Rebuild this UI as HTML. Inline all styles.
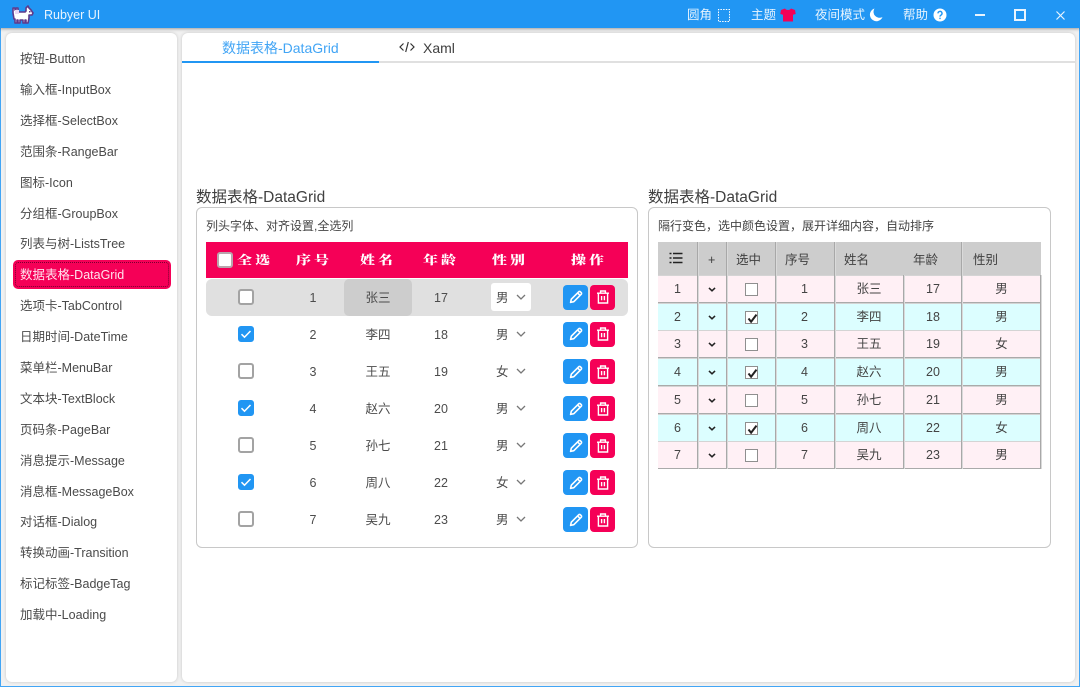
<!DOCTYPE html>
<html lang="zh-CN">
<head>
<meta charset="utf-8">
<title>Rubyer UI</title>
<style>
*{box-sizing:border-box;margin:0;padding:0}
html,body{width:1080px;height:687px;overflow:hidden;background:#fff}
body{position:relative;font-family:"Liberation Sans","Noto Sans CJK SC",sans-serif;font-size:12.5px;color:#444}
.a{position:absolute}
.t{position:absolute;white-space:nowrap}
.c{position:absolute;text-align:center;white-space:nowrap}
#win{position:absolute;left:0;top:0;width:1080px;height:687px;background:#f1f1f1;border:1px solid #42a5f5;border-top:0}
#bar{position:absolute;left:0;top:0;width:1080px;height:28px;background:#2196f3;box-shadow:0 1px 3px rgba(0,0,0,.35);color:#e8f4fe;line-height:30px;font-size:12.5px}
.panel{position:absolute;background:#fff;border-radius:6px;top:33px;height:649px;box-shadow:0 0 3px rgba(0,0,0,.18)}
.nav{position:absolute;left:20px;white-space:nowrap;line-height:18px;font-size:12.5px;color:#4a4a4a}
.gt{position:absolute;top:188px;font-size:15.5px;line-height:20px;color:#404040;white-space:nowrap}
.box{position:absolute;top:207px;height:341px;border:1px solid #c8c8c8;border-radius:6px;background:#fff}
.sub{position:absolute;top:218px;font-size:12px;line-height:16px;color:#444;white-space:nowrap}
.hd{position:absolute;top:252px;font-family:"Noto Serif CJK SC","Liberation Serif",serif;font-weight:900;font-size:15px;line-height:16px;letter-spacing:3px;color:#fff;white-space:nowrap;transform:scaleY(.8);transform-origin:0 50%}
.lr{position:absolute;left:206px;width:422px;height:37px;line-height:39px;font-size:12.5px;color:#4c4c4c}
.cb{position:absolute;left:32px;top:10px;width:16px;height:16px;border:2px solid #a3a3a3;border-radius:3px;background:#fff}
.cb.on{background:#2196f3;border-color:#2196f3}
.cb svg{position:absolute;left:-2px;top:-2px}
.btn{position:absolute;top:6px;width:25px;height:25px;border-radius:4px}
.btn svg{position:absolute;left:4.5px;top:4.5px}
.e{left:357px;background:#2196f3}
.d{left:384px;background:#f50057}
.ar{position:absolute;left:310px;top:15px}
.rr{position:absolute;left:658px;width:383px;height:28px;line-height:27px;border-top:1px solid #d4d4d4;border-bottom:1px solid #aaa;font-size:12.5px;color:#444}
.p{background:#fff0f5}.y{background:#dcfeff}
.v{position:absolute;width:1px;background:#a8a8a8;box-shadow:1px 0 0 #dadada}
.rc{position:absolute;left:658px;top:242px;width:383px;height:33px;background:#cdcdcd}
.rh{position:absolute;top:252px;font-size:12.5px;line-height:16px;color:#404040;white-space:nowrap}
.sq{position:absolute;left:87px;top:7px;width:13px;height:13px;border:1px solid #8f8f8f;background:#fff}
.sq svg{position:absolute;left:0;top:0}
.ch{position:absolute;left:50px;top:11px}
</style>
</head>
<body>
<svg width="0" height="0" style="position:absolute">
<symbol id="pen" viewBox="0 0 16 16"><path d="M2.600 13.400l.7-3.200 7.400-7.400a1.200 1.200 0 0 1 1.700 0l.8.8a1.200 1.200 0 0 1 0 1.700l-7.400 7.400zM9.600 3.900l2.500 2.500" fill="none" stroke="#fff" stroke-width="1.600" stroke-linejoin="round"/></symbol>
<symbol id="bin" viewBox="0 0 16 16"><path d="M2 4.200h12M5.600 4.200V2h4.800v2.200M3.400 4.200v9.800h9.200V4.200M6.600 7v4.200M9.400 7v4.200" fill="none" stroke="#fff" stroke-width="1.400"/></symbol>
<symbol id="dn" viewBox="0 0 10 6"><path d="M1 1l4 4 4-4" fill="none" stroke="#777" stroke-width="1.300"/></symbol>
<symbol id="dk" viewBox="0 0 10 6"><path d="M1.200 1l3.800 3.600L8.800 1" fill="none" stroke="#222" stroke-width="1.900"/></symbol>
<symbol id="tk" viewBox="0 0 16 16"><path d="M3.500 8.200l3 3 6-6.200" fill="none" stroke="#fff" stroke-width="1.500"/></symbol>
<symbol id="tb" viewBox="0 0 13 13"><path d="M2.500 6.500l2.600 3.200L10.500 2.600" fill="none" stroke="#222" stroke-width="2"/></symbol>
</svg>
<div id="win"></div>

<div id="bar">
  <svg class="a" style="left:12px;top:5px" width="22" height="19" viewBox="0 0 22 19">
    <path d="M1 8V3h2v2h1V3h2v4h7l1-1V3l2-2 1 2 2 2 2 3-1 2h-3v3l-1 5h-2v-3h-1v3h-2v-3H8v3H6v-3H5v3H3v-4H2z" fill="#fff" stroke="#5e3a8c" stroke-width="1.600" stroke-linejoin="round"/>
    <rect x="17" y="6" width="1.500" height="1.500" fill="#5e3a8c"/>
    <rect x="3" y="5" width="4" height="4" fill="#e9d8f5"/>
  </svg>
  <span class="t" style="left:44px;top:0">Rubyer UI</span>
  <span class="t" style="left:687px;top:0">圆角</span>
  <svg class="a" style="left:718px;top:9px" width="12" height="13" viewBox="0 0 12 13"><path d="M.5 4V.5h11V12.500H.5V4" fill="none" stroke="#fff" stroke-width="1" stroke-dasharray="1.500 1.200"/></svg>
  <span class="t" style="left:751px;top:0">主题</span>
  <svg class="a" style="left:780px;top:8px" width="16" height="14" viewBox="0 0 16 14"><path d="M5 .5L1 2 .3 6l2.700.700V13.500h10V6.700L15.700 6 15 2 11 .5C10 2.500 6 2.500 5 .5z" fill="#f50057"/></svg>
  <span class="t" style="left:815px;top:0">夜间模式</span>
  <svg class="a" style="left:869px;top:8px" width="14" height="14" viewBox="0 0 14 14"><path d="M5.500.5A6.500 6.500 0 1 0 13.500 9 6 6 0 0 1 5.500.5z" fill="#fff"/></svg>
  <span class="t" style="left:903px;top:0">帮助</span>
  <svg class="a" style="left:933px;top:8px" width="14" height="14" viewBox="0 0 14 14"><circle cx="7" cy="7" r="6.500" fill="#fff"/><path d="M5 5.400a2 2 0 1 1 3 1.700c-.7.400-1 .8-1 1.500" fill="none" stroke="#2196f3" stroke-width="1.400"/><rect x="6.300" y="9.700" width="1.400" height="1.400" fill="#2196f3"/></svg>
  <div class="a" style="left:975px;top:14px;width:10px;height:2px;background:#e8f4fe"></div>
  <div class="a" style="left:1014px;top:9px;width:12px;height:12px;border:2px solid #e8f4fe"></div>
  <svg class="a" style="left:1055px;top:10px" width="11" height="11" viewBox="0 0 11 11"><path d="M1.500 1.500l8 8M9.500 1.500l-8 8" stroke="#e8f4fe" stroke-width="1.200"/></svg>
</div>

<div class="panel" style="left:6px;width:171px"></div>
<div class="panel" style="left:182px;width:893px"></div>

<div class="a" style="left:13px;top:260px;width:158px;height:29px;background:#f50057;border-radius:5px"></div>
<div class="a" style="left:15px;top:262px;width:154px;height:25px;border:1px dotted #7a0030;border-radius:3px"></div>
<span class="nav" style="top:50px">按钮-Button</span>
<span class="nav" style="top:81px">输入框-InputBox</span>
<span class="nav" style="top:112px">选择框-SelectBox</span>
<span class="nav" style="top:143px">范围条-RangeBar</span>
<span class="nav" style="top:174px">图标-Icon</span>
<span class="nav" style="top:205px">分组框-GroupBox</span>
<span class="nav" style="top:235px">列表与树-ListsTree</span>
<span class="nav" style="top:266px;color:#ffe3ee">数据表格-DataGrid</span>
<span class="nav" style="top:297px">选项卡-TabControl</span>
<span class="nav" style="top:328px">日期时间-DateTime</span>
<span class="nav" style="top:359px">菜单栏-MenuBar</span>
<span class="nav" style="top:390px">文本块-TextBlock</span>
<span class="nav" style="top:421px">页码条-PageBar</span>
<span class="nav" style="top:452px">消息提示-Message</span>
<span class="nav" style="top:483px">消息框-MessageBox</span>
<span class="nav" style="top:513px">对话框-Dialog</span>
<span class="nav" style="top:544px">转换动画-Transition</span>
<span class="nav" style="top:575px">标记标签-BadgeTag</span>
<span class="nav" style="top:606px">加载中-Loading</span>

<div class="a" style="left:182px;top:61px;width:893px;height:2px;background:#e0e0e0"></div>
<div class="a" style="left:182px;top:61px;width:197px;height:2px;background:#2196f3"></div>
<span class="t" style="left:222px;top:39px;font-size:14px;line-height:18px;color:#42a5f5">数据表格-DataGrid</span>
<svg class="a" style="left:399px;top:41px" width="16" height="12" viewBox="0 0 16 12"><path d="M4.500 2.500L1 6l3.500 3.500M11.500 2.500L15 6l-3.500 3.500M9.300 1L6.700 11" fill="none" stroke="#333" stroke-width="1.200"/></svg>
<span class="t" style="left:423px;top:39px;font-size:14px;line-height:18px;color:#404040">Xaml</span>

<span class="gt" style="left:196px">数据表格-DataGrid</span>
<div class="box" style="left:196px;width:442px"></div>
<span class="sub" style="left:206px">列头字体、对齐设置,全选列</span>

<div class="a" style="left:206px;top:242px;width:422px;height:36px;background:#f50057"></div>
<div class="a" style="left:217px;top:252px;width:16px;height:16px;background:#fff;border:2px solid #b9a5ad;border-radius:3px"></div>
<span class="hd" style="left:237px">全选</span>
<span class="hd" style="left:296px">序号</span>
<span class="hd" style="left:360px">姓名</span>
<span class="hd" style="left:423px">年龄</span>
<span class="hd" style="left:492px">性别</span>
<span class="hd" style="left:571px">操作</span>

<div class="lr" style="top:278.800px;background:#e0e0e0;border-radius:6px">
  <div class="a" style="left:138px;top:0;width:68px;height:37px;background:#cdcdcd;border-radius:5px"></div>
  <div class="a" style="left:285px;top:4px;width:40px;height:28px;background:#fff;border-radius:3px"></div>
  <div class="cb"></div><span class="c" style="left:87px;width:40px">1</span><span class="c" style="left:152px;width:40px">张三</span><span class="c" style="left:215px;width:40px">17</span><span class="t" style="left:290px">男</span><svg class="ar" width="10" height="6"><use href="#dn"/></svg>
  <div class="btn e"><svg width="16" height="16"><use href="#pen"/></svg></div><div class="btn d"><svg width="16" height="16"><use href="#bin"/></svg></div>
</div>
<div class="lr" style="top:315.900px">
  <div class="cb on"><svg width="16" height="16"><use href="#tk"/></svg></div><span class="c" style="left:87px;width:40px">2</span><span class="c" style="left:152px;width:40px">李四</span><span class="c" style="left:215px;width:40px">18</span><span class="t" style="left:290px">男</span><svg class="ar" width="10" height="6"><use href="#dn"/></svg>
  <div class="btn e"><svg width="16" height="16"><use href="#pen"/></svg></div><div class="btn d"><svg width="16" height="16"><use href="#bin"/></svg></div>
</div>
<div class="lr" style="top:353px">
  <div class="cb"></div><span class="c" style="left:87px;width:40px">3</span><span class="c" style="left:152px;width:40px">王五</span><span class="c" style="left:215px;width:40px">19</span><span class="t" style="left:290px">女</span><svg class="ar" width="10" height="6"><use href="#dn"/></svg>
  <div class="btn e"><svg width="16" height="16"><use href="#pen"/></svg></div><div class="btn d"><svg width="16" height="16"><use href="#bin"/></svg></div>
</div>
<div class="lr" style="top:390.100px">
  <div class="cb on"><svg width="16" height="16"><use href="#tk"/></svg></div><span class="c" style="left:87px;width:40px">4</span><span class="c" style="left:152px;width:40px">赵六</span><span class="c" style="left:215px;width:40px">20</span><span class="t" style="left:290px">男</span><svg class="ar" width="10" height="6"><use href="#dn"/></svg>
  <div class="btn e"><svg width="16" height="16"><use href="#pen"/></svg></div><div class="btn d"><svg width="16" height="16"><use href="#bin"/></svg></div>
</div>
<div class="lr" style="top:427.200px">
  <div class="cb"></div><span class="c" style="left:87px;width:40px">5</span><span class="c" style="left:152px;width:40px">孙七</span><span class="c" style="left:215px;width:40px">21</span><span class="t" style="left:290px">男</span><svg class="ar" width="10" height="6"><use href="#dn"/></svg>
  <div class="btn e"><svg width="16" height="16"><use href="#pen"/></svg></div><div class="btn d"><svg width="16" height="16"><use href="#bin"/></svg></div>
</div>
<div class="lr" style="top:464.300px">
  <div class="cb on"><svg width="16" height="16"><use href="#tk"/></svg></div><span class="c" style="left:87px;width:40px">6</span><span class="c" style="left:152px;width:40px">周八</span><span class="c" style="left:215px;width:40px">22</span><span class="t" style="left:290px">女</span><svg class="ar" width="10" height="6"><use href="#dn"/></svg>
  <div class="btn e"><svg width="16" height="16"><use href="#pen"/></svg></div><div class="btn d"><svg width="16" height="16"><use href="#bin"/></svg></div>
</div>
<div class="lr" style="top:501.400px">
  <div class="cb"></div><span class="c" style="left:87px;width:40px">7</span><span class="c" style="left:152px;width:40px">吴九</span><span class="c" style="left:215px;width:40px">23</span><span class="t" style="left:290px">男</span><svg class="ar" width="10" height="6"><use href="#dn"/></svg>
  <div class="btn e"><svg width="16" height="16"><use href="#pen"/></svg></div><div class="btn d"><svg width="16" height="16"><use href="#bin"/></svg></div>
</div>

<span class="gt" style="left:648px">数据表格-DataGrid</span>
<div class="box" style="left:648px;width:403px"></div>
<span class="sub" style="left:658px">隔行变色，选中颜色设置，展开详细内容，自动排序</span>

<div class="rc"></div>
<svg class="a" style="left:669px;top:252px" width="14" height="12" viewBox="0 0 14 12"><path d="M4 1.500h9.500M4 6h9.500M4 10.500h9.500M.5 1.500h2M.5 6h2M.5 10.500h2" stroke="#222" stroke-width="1.500"/></svg>
<span class="rh" style="left:708px">+</span>
<span class="rh" style="left:736px">选中</span>
<span class="rh" style="left:785px">序号</span>
<span class="rh" style="left:844px">姓名</span>
<span class="rh" style="left:913px">年龄</span>
<span class="rh" style="left:973px">性别</span>

<div class="rr p" style="top:275px"><span class="c" style="left:0;width:39px">1</span><svg class="ch" width="8" height="5"><use href="#dk"/></svg><div class="sq"></div><span class="c" style="left:117px;width:59px">1</span><span class="c" style="left:176px;width:70px">张三</span><span class="c" style="left:246px;width:58px">17</span><span class="c" style="left:304px;width:79px">男</span></div>
<div class="rr y" style="top:302.700px"><span class="c" style="left:0;width:39px">2</span><svg class="ch" width="8" height="5"><use href="#dk"/></svg><div class="sq"><svg width="13" height="13" viewBox="0 0 13 13"><use href="#tb"/></svg></div><span class="c" style="left:117px;width:59px">2</span><span class="c" style="left:176px;width:70px">李四</span><span class="c" style="left:246px;width:58px">18</span><span class="c" style="left:304px;width:79px">男</span></div>
<div class="rr p" style="top:330.400px"><span class="c" style="left:0;width:39px">3</span><svg class="ch" width="8" height="5"><use href="#dk"/></svg><div class="sq"></div><span class="c" style="left:117px;width:59px">3</span><span class="c" style="left:176px;width:70px">王五</span><span class="c" style="left:246px;width:58px">19</span><span class="c" style="left:304px;width:79px">女</span></div>
<div class="rr y" style="top:358.100px"><span class="c" style="left:0;width:39px">4</span><svg class="ch" width="8" height="5"><use href="#dk"/></svg><div class="sq"><svg width="13" height="13" viewBox="0 0 13 13"><use href="#tb"/></svg></div><span class="c" style="left:117px;width:59px">4</span><span class="c" style="left:176px;width:70px">赵六</span><span class="c" style="left:246px;width:58px">20</span><span class="c" style="left:304px;width:79px">男</span></div>
<div class="rr p" style="top:385.800px"><span class="c" style="left:0;width:39px">5</span><svg class="ch" width="8" height="5"><use href="#dk"/></svg><div class="sq"></div><span class="c" style="left:117px;width:59px">5</span><span class="c" style="left:176px;width:70px">孙七</span><span class="c" style="left:246px;width:58px">21</span><span class="c" style="left:304px;width:79px">男</span></div>
<div class="rr y" style="top:413.500px"><span class="c" style="left:0;width:39px">6</span><svg class="ch" width="8" height="5"><use href="#dk"/></svg><div class="sq"><svg width="13" height="13" viewBox="0 0 13 13"><use href="#tb"/></svg></div><span class="c" style="left:117px;width:59px">6</span><span class="c" style="left:176px;width:70px">周八</span><span class="c" style="left:246px;width:58px">22</span><span class="c" style="left:304px;width:79px">女</span></div>
<div class="rr p" style="top:441.200px"><span class="c" style="left:0;width:39px">7</span><svg class="ch" width="8" height="5"><use href="#dk"/></svg><div class="sq"></div><span class="c" style="left:117px;width:59px">7</span><span class="c" style="left:176px;width:70px">吴九</span><span class="c" style="left:246px;width:58px">23</span><span class="c" style="left:304px;width:79px">男</span></div>

<div class="v" style="left:697px;top:242px;height:227px"></div>
<div class="v" style="left:726px;top:242px;height:227px"></div>
<div class="v" style="left:775px;top:242px;height:227px"></div>
<div class="v" style="left:834px;top:242px;height:227px"></div>
<div class="v" style="left:903px;top:275px;height:194px"></div>
<div class="v" style="left:961px;top:242px;height:227px"></div>
<div class="v" style="left:1040px;top:275px;height:194px"></div>
</body>
</html>
